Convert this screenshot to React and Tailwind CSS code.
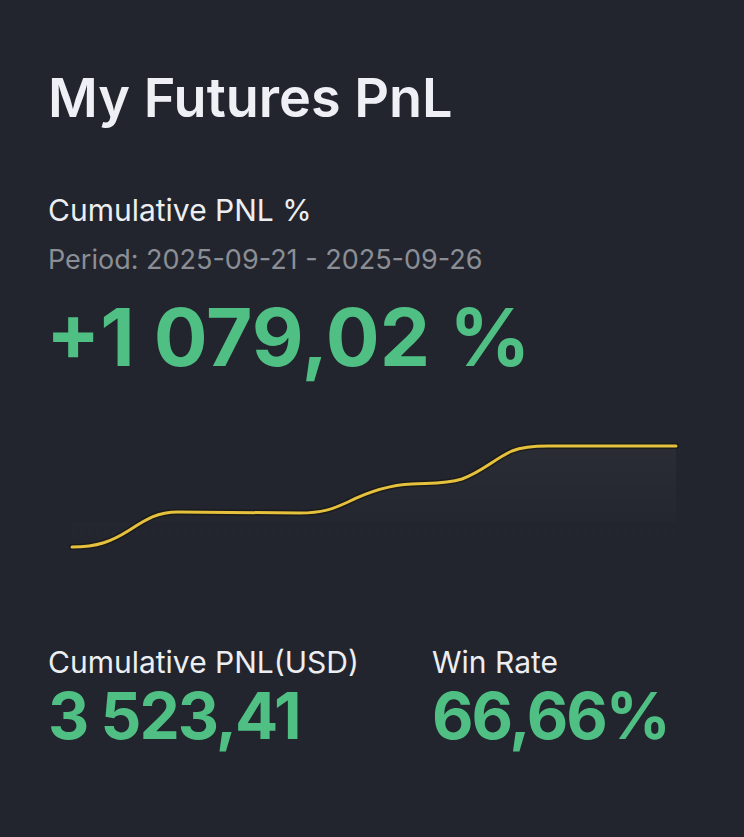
import React from 'react';

const font = { fontFamily: 'Inter, "Noto Sans", sans-serif' };

function PnlChart() {
  const line =
    'M72,547 C98,547 112,541 128,531 C145,520 156,512 178,512 L300,513 C322,513 333,509 348,502 C368,492 388,485 412,484 C432,483 446,484 462,479 C482,472 496,458 512,451 C522,447 532,446 548,446 L676,446';
  return (
    <svg className="block" width="744" height="150" viewBox="0 420 744 150">
      <defs>
        <linearGradient id="pnlFill" x1="0" y1="0" x2="0" y2="1">
          <stop offset="0%" stopColor="#ffffff" stopOpacity="0.035" />
          <stop offset="100%" stopColor="#ffffff" stopOpacity="0" />
        </linearGradient>
      </defs>
      <path d={`${line} L676,522 L72,522 Z`} fill="url(#pnlFill)" />
      <line x1="72" y1="533" x2="676" y2="533" stroke="#2c2f37" strokeWidth="1" strokeDasharray="2 6" />
      <path d={line} fill="none" stroke="#15140e" strokeWidth="6" strokeLinecap="round" opacity="0.6" />
      <path d={line} fill="none" stroke="#e6c13e" strokeWidth="3" strokeLinecap="round" />
    </svg>
  );
}

export default function App() {
  return (
    <div className="w-[744px] h-[837px] bg-[#22252d] overflow-hidden" style={font}>
      <div className="pl-12 pt-[66px]">
        <h1 className="text-[54px] leading-[64px] font-semibold text-[#eef0f5]">My Futures PnL</h1>
        <div className="mt-[62px] text-[30px] leading-[36px] text-[#eceef2]">Cumulative PNL %</div>
        <div className="mt-[15px] text-[27px] leading-[34px] text-[#8b8e95]">Period: 2025-09-21 - 2025-09-26</div>
        <div className="mt-[14px] text-[80px] leading-[92px] font-bold text-[#4fbf84] -ml-[2px]">+1 079,02 %</div>
      </div>
      <div className="mt-[37px]">
        <PnlChart />
      </div>
      <div className="pl-12 mt-[74px] flex">
        <div className="w-[384px]">
          <div className="text-[30px] leading-[36px] text-[#eceef2]">Cumulative PNL(USD)</div>
          <div className="text-[64px] leading-[72px] font-bold text-[#4fbf84] tracking-[-2px]">3 523,41</div>
        </div>
        <div>
          <div className="text-[30px] leading-[36px] text-[#eceef2]">Win Rate</div>
          <div className="text-[64px] leading-[72px] font-bold text-[#4fbf84] tracking-[-2px]">66,66%</div>
        </div>
      </div>
    </div>
  );
}
